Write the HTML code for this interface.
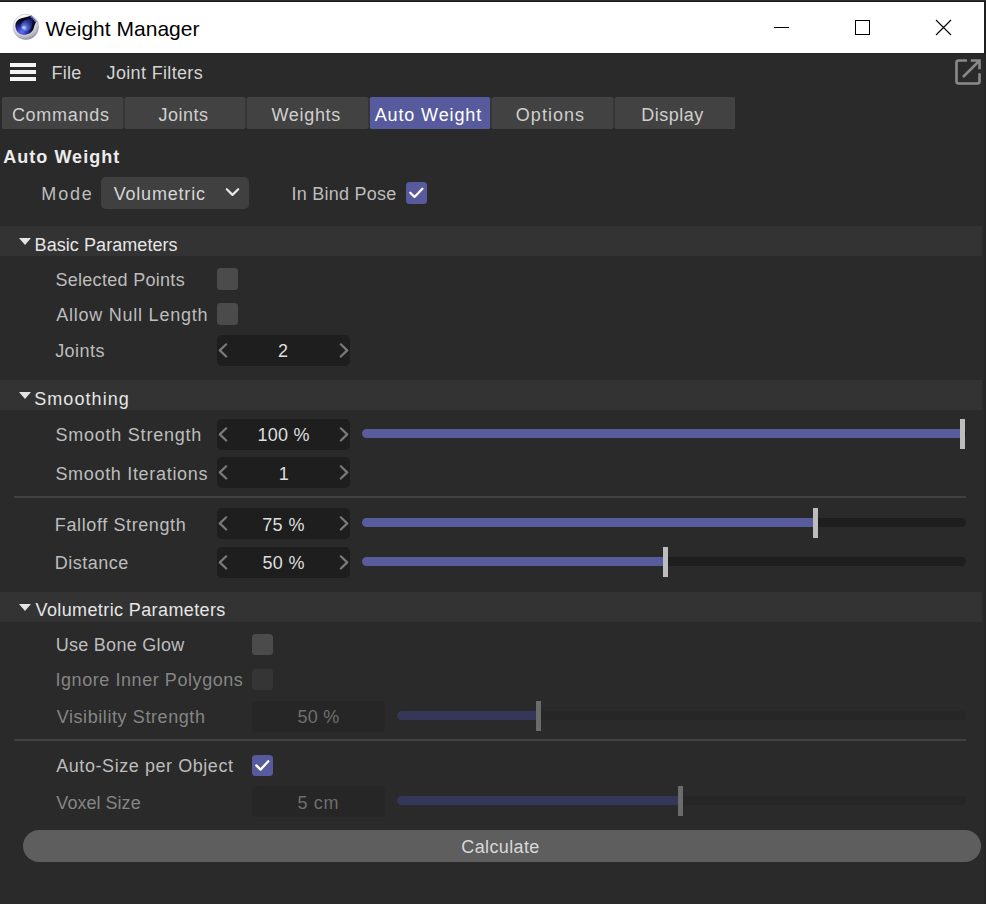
<!DOCTYPE html>
<html><head><meta charset="utf-8">
<style>
*{margin:0;padding:0;box-sizing:border-box}
html,body{width:986px;height:904px;overflow:hidden;background:#2a2a2a}
body{position:relative;font-family:"Liberation Sans",sans-serif;font-size:18px;line-height:18px}
.a{position:absolute}
.t{position:absolute;white-space:pre;font-size:18px;line-height:18px;color:#bdbdbd}
.tab{position:absolute;top:97px;height:32px;background:#424242;border-radius:1.5px}
.band{position:absolute;left:0;width:982px;height:30px;background:#333333}
.tri{position:absolute;width:0;height:0;border-left:6.1px solid transparent;border-right:6.1px solid transparent;border-top:7.3px solid #e4e4e4}
.cb{position:absolute;width:21px;height:22px;border-radius:3.5px;background:#4b4b4b}
.fld{position:absolute;left:217px;width:133px;height:31px;border-radius:5px;background:#1e1e1e}
.sep{position:absolute;left:14px;width:952px;height:2px;background:#404040}
.trk{position:absolute;left:362px;width:604px;height:9px;border-radius:4.5px;background:#1e1e1e}
.fill{position:absolute;left:0;top:0;height:9px;border-radius:4.5px 0 0 4.5px;background:#585c9d}
.hdl{position:absolute;top:-10.5px;width:5px;height:30px;background:#bdbdbd}
</style></head><body>
<!-- top border + title bar -->
<div class="a" style="left:0;top:0;width:986px;height:1px;background:#2b2b2b"></div>
<div class="a" style="left:0;top:1px;width:986px;height:1px;background:#1b1b1b"></div>
<div class="a" style="left:0;top:2px;width:984px;height:51px;background:#ffffff"></div>
<div class="a" style="left:0;top:53px;width:984px;height:1px;background:#242424"></div>
<div class="a" style="left:984px;top:2px;width:2px;height:52px;background:#1f1f1f"></div>
<div class="a" style="left:984px;top:54px;width:2px;height:850px;background:#262626"></div>
<!-- C4D icon -->
<svg class="a" style="left:10px;top:12px" width="32" height="32" viewBox="0 0 32 32">
<defs>
<radialGradient id="sph" cx="40%" cy="28%" r="78%"><stop offset="0" stop-color="#ffffff"/><stop offset="0.5" stop-color="#ececf0"/><stop offset="0.8" stop-color="#b8b8c4"/><stop offset="1" stop-color="#7c7c88"/></radialGradient>
<radialGradient id="drk" cx="30%" cy="85%" r="60%"><stop offset="0" stop-color="#6a70ff"/><stop offset="0.4" stop-color="#3038b0"/><stop offset="0.75" stop-color="#12144a"/><stop offset="1" stop-color="#06061c"/></radialGradient>
<radialGradient id="blb" cx="30%" cy="75%" r="80%"><stop offset="0" stop-color="#a0c0ff"/><stop offset="0.3" stop-color="#5068d0"/><stop offset="0.7" stop-color="#2a3490"/><stop offset="1" stop-color="#141a60"/></radialGradient>
</defs>
<circle cx="15.8" cy="14.7" r="13" fill="url(#sph)"/>
<circle cx="15.8" cy="14.7" r="12.6" fill="none" stroke="#9a9aa8" stroke-width="0.5" opacity="0.6"/>
<path d="M21.2 3.6 L26.5 9.2 C25.5 10.5 24.5 13 23.5 17 C22 20.5 19 22.6 13.5 22.8 C8.5 22.6 5.4 18.5 5.3 13.5 C5.5 10 7.5 7.8 10 6.8 C13 5.6 17.5 5.2 21.2 3.6Z" fill="url(#drk)"/>
<path d="M21.2 3.6 L26.5 9.2 L25.2 10.2 C23.8 7.8 22.3 6.3 20.2 5 Z" fill="#7078e0"/>
<path d="M22.5 6 C23 9 22.5 12.5 21.2 15.5 C19.8 18.3 17.5 19.3 15.5 19.2 C12.8 19 11 17 11 14.5 C11 11 13.5 8.6 16.8 7.5 C18.8 6.8 20.8 6.4 22.5 6Z" fill="url(#blb)"/>
<ellipse cx="13.6" cy="15.6" rx="1.8" ry="1.3" fill="#b0ccff" opacity="0.85"/>
</svg>
<!-- window controls -->
<div class="a" style="left:774px;top:27px;width:15px;height:1px;background:#000"></div>
<div class="a" style="left:855px;top:20px;width:15px;height:15px;border:1px solid #000"></div>
<svg class="a" style="left:935px;top:19px" width="17" height="17" viewBox="0 0 17 17"><path d="M1 1L16 16M16 1L1 16" stroke="#000" stroke-width="1.1"/></svg>

<!-- menu bar -->
<div class="a" style="left:10px;top:63px;width:26px;height:3.5px;background:#f4f4f4"></div>
<div class="a" style="left:10px;top:70.1px;width:26px;height:3.5px;background:#f4f4f4"></div>
<div class="a" style="left:10px;top:77.3px;width:26px;height:3.5px;background:#f4f4f4"></div>
<svg class="a" style="left:955px;top:59px" width="26" height="26" viewBox="0 0 26 26" fill="none" stroke="#8a8a8a" stroke-width="2.6">
<path d="M12 1.5H3.5Q1.5 1.5 1.5 3.5V22.5Q1.5 24.5 3.5 24.5H22.5Q24.5 24.5 24.5 22.5V14.2"/>
<path d="M15.8 1.5H24.5V10.2M24.2 1.8L8 18"/>
</svg>

<!-- tabs -->
<div class="a" style="left:4px;top:98px;width:729px;height:30px;background:#363636"></div>
<div class="tab" style="left:2px;width:121.3px"></div>
<div class="tab" style="left:124.8px;width:120.6px"></div>
<div class="tab" style="left:246.8px;width:121.2px"></div>
<div class="tab" style="left:369.7px;width:120.3px;background:#575b9d"></div>
<div class="tab" style="left:491.7px;width:121.2px"></div>
<div class="tab" style="left:614.7px;width:120.3px"></div>

<!-- Auto Weight heading -->
<div class="a" style="left:101px;top:177px;width:148px;height:32px;border-radius:5px;background:#404040"></div>
<svg class="a" style="left:225px;top:187px" width="15" height="11" viewBox="0 0 15 11"><path d="M1.8 2.2L7.5 7.9L13.2 2.2" fill="none" stroke="#e6e6e6" stroke-width="2.2" stroke-linecap="round" stroke-linejoin="round"/></svg>
<div class="cb" style="left:406px;top:182px;background:#575b9d"></div>
<svg class="a" style="left:406px;top:182px" width="21" height="22" viewBox="0 0 21 22"><path d="M4.3 10.8L8.5 15L16.4 6.8" fill="none" stroke="#fff" stroke-width="2.3" stroke-linecap="round" stroke-linejoin="round"/></svg>

<!-- Basic Parameters -->
<div class="band" style="top:226px"></div>
<div class="tri" style="left:19.4px;top:238px"></div>
<div class="cb" style="left:217px;top:268px"></div>
<div class="cb" style="left:217px;top:303px"></div>
<div class="fld" style="top:335px"><svg class="a" style="left:0;top:0" width="133" height="31" viewBox="0 0 133 31"><path d="M9.2 9.3L2.8 15.4L9.2 21.5M123.8 9.3L130.2 15.4L123.8 21.5" fill="none" stroke="#7a7a7a" stroke-width="2.2" stroke-linecap="round" stroke-linejoin="round"/></svg></div>

<!-- Smoothing -->
<div class="band" style="top:380px"></div>
<div class="tri" style="left:19.4px;top:392px"></div>
<div class="fld" style="top:419px"><svg class="a" style="left:0;top:0" width="133" height="31" viewBox="0 0 133 31"><path d="M9.2 9.3L2.8 15.4L9.2 21.5M123.8 9.3L130.2 15.4L123.8 21.5" fill="none" stroke="#7a7a7a" stroke-width="2.2" stroke-linecap="round" stroke-linejoin="round"/></svg></div>
<div class="trk" style="top:429px"><div class="fill" style="width:600px"></div><div class="hdl" style="left:598px"></div></div>
<div class="fld" style="top:457px"><svg class="a" style="left:0;top:0" width="133" height="31" viewBox="0 0 133 31"><path d="M9.2 9.3L2.8 15.4L9.2 21.5M123.8 9.3L130.2 15.4L123.8 21.5" fill="none" stroke="#7a7a7a" stroke-width="2.2" stroke-linecap="round" stroke-linejoin="round"/></svg></div>
<div class="sep" style="top:496px"></div>
<div class="fld" style="top:508px"><svg class="a" style="left:0;top:0" width="133" height="31" viewBox="0 0 133 31"><path d="M9.2 9.3L2.8 15.4L9.2 21.5M123.8 9.3L130.2 15.4L123.8 21.5" fill="none" stroke="#7a7a7a" stroke-width="2.2" stroke-linecap="round" stroke-linejoin="round"/></svg></div>
<div class="trk" style="top:518px"><div class="fill" style="width:451px"></div><div class="hdl" style="left:451px"></div></div>
<div class="fld" style="top:547px"><svg class="a" style="left:0;top:0" width="133" height="31" viewBox="0 0 133 31"><path d="M9.2 9.3L2.8 15.4L9.2 21.5M123.8 9.3L130.2 15.4L123.8 21.5" fill="none" stroke="#7a7a7a" stroke-width="2.2" stroke-linecap="round" stroke-linejoin="round"/></svg></div>
<div class="trk" style="top:557px"><div class="fill" style="width:301px"></div><div class="hdl" style="left:301px"></div></div>

<!-- Volumetric Parameters -->
<div class="band" style="top:592px"></div>
<div class="tri" style="left:19.4px;top:604px"></div>
<div class="cb" style="left:252px;top:634px;height:21px"></div>
<div class="cb" style="left:252px;top:669px;height:21px;background:#353535"></div>
<div class="fld" style="left:252px;top:701px;background:#262626"></div>
<div class="trk" style="left:397px;width:569px;top:711px;height:9px;background:#262626"><div class="fill" style="width:141px;height:9px;background:#34365a"></div><div class="hdl" style="left:139px;background:#6b6b6b"></div></div>
<div class="sep" style="top:739px"></div>
<div class="cb" style="left:252px;top:755px;height:21px;background:#575b9d"></div>
<svg class="a" style="left:252px;top:755px" width="21" height="21" viewBox="0 0 21 21"><path d="M4.3 10.4L8.5 14.6L16.3 6.3" fill="none" stroke="#fff" stroke-width="2.3" stroke-linecap="round" stroke-linejoin="round"/></svg>
<div class="fld" style="left:252px;top:786px;background:#262626"></div>
<div class="trk" style="left:397px;width:569px;top:796px;height:9px;background:#262626"><div class="fill" style="width:283px;height:9px;background:#34365a"></div><div class="hdl" style="left:281px;background:#6b6b6b"></div></div>

<!-- Calculate -->
<div class="a" style="left:23px;top:830px;width:957.5px;height:32px;border-radius:16px;background:#5e5e5e"></div>
<div class="t" style="left:45.59px;top:17.80px;font-size:21px;line-height:21px;color:#000000;font-weight:normal;letter-spacing:0.016px">Weight Manager</div>
<div class="t" style="left:51.60px;top:64.00px;font-size:18px;line-height:18px;color:#d4d4d4;font-weight:normal;letter-spacing:0.209px">File</div>
<div class="t" style="left:106.60px;top:64.00px;font-size:18px;line-height:18px;color:#d4d4d4;font-weight:normal;letter-spacing:0.339px">Joint Filters</div>
<div class="t" style="left:11.89px;top:106.00px;font-size:18px;line-height:18px;color:#cfcfcf;font-weight:normal;letter-spacing:0.727px">Commands</div>
<div class="t" style="left:158.60px;top:106.00px;font-size:18px;line-height:18px;color:#cfcfcf;font-weight:normal;letter-spacing:0.472px">Joints</div>
<div class="t" style="left:271.42px;top:106.00px;font-size:18px;line-height:18px;color:#cfcfcf;font-weight:normal;letter-spacing:0.699px">Weights</div>
<div class="t" style="left:374.66px;top:106.00px;font-size:18px;line-height:18px;color:#ffffff;font-weight:normal;letter-spacing:0.884px">Auto Weight</div>
<div class="t" style="left:515.84px;top:106.00px;font-size:18px;line-height:18px;color:#cfcfcf;font-weight:normal;letter-spacing:1.023px">Options</div>
<div class="t" style="left:641.18px;top:106.00px;font-size:18px;line-height:18px;color:#cfcfcf;font-weight:normal;letter-spacing:0.526px">Display</div>
<div class="t" style="left:3.29px;top:148.00px;font-size:18px;line-height:18px;color:#ececec;font-weight:bold;letter-spacing:1.032px">Auto Weight</div>
<div class="t" style="left:41.37px;top:185.00px;font-size:18px;line-height:18px;color:#bdbdbd;font-weight:normal;letter-spacing:1.829px">Mode</div>
<div class="t" style="left:113.70px;top:185.00px;font-size:18px;line-height:18px;color:#d6d6d6;font-weight:normal;letter-spacing:0.802px">Volumetric</div>
<div class="t" style="left:291.42px;top:185.00px;font-size:18px;line-height:18px;color:#bdbdbd;font-weight:normal;letter-spacing:0.247px">In Bind Pose</div>
<div class="t" style="left:34.60px;top:236.00px;font-size:18px;line-height:18px;color:#e6e6e6;font-weight:normal;letter-spacing:0.063px">Basic Parameters</div>
<div class="t" style="left:55.42px;top:271.00px;font-size:18px;line-height:18px;color:#bdbdbd;font-weight:normal;letter-spacing:0.297px">Selected Points</div>
<div class="t" style="left:56.24px;top:306.00px;font-size:18px;line-height:18px;color:#bdbdbd;font-weight:normal;letter-spacing:0.760px">Allow Null Length</div>
<div class="t" style="left:55.14px;top:342.00px;font-size:18px;line-height:18px;color:#bdbdbd;font-weight:normal;letter-spacing:0.487px">Joints</div>
<div class="t" style="left:278.00px;top:342.00px;font-size:18px;line-height:18px;color:#dedede;font-weight:normal;letter-spacing:0.000px">2</div>
<div class="t" style="left:34.24px;top:390.00px;font-size:18px;line-height:18px;color:#e6e6e6;font-weight:normal;letter-spacing:1.063px">Smoothing</div>
<div class="t" style="left:55.42px;top:426.00px;font-size:18px;line-height:18px;color:#bdbdbd;font-weight:normal;letter-spacing:0.771px">Smooth Strength</div>
<div class="t" style="left:257.45px;top:426.00px;font-size:18px;line-height:18px;color:#dedede;font-weight:normal;letter-spacing:0.287px">100 %</div>
<div class="t" style="left:55.42px;top:465.00px;font-size:18px;line-height:18px;color:#bdbdbd;font-weight:normal;letter-spacing:0.686px">Smooth Iterations</div>
<div class="t" style="left:278.69px;top:465.00px;font-size:18px;line-height:18px;color:#dedede;font-weight:normal;letter-spacing:0.000px">1</div>
<div class="t" style="left:54.81px;top:516.00px;font-size:18px;line-height:18px;color:#bdbdbd;font-weight:normal;letter-spacing:0.613px">Falloff Strength</div>
<div class="t" style="left:262.21px;top:516.00px;font-size:18px;line-height:18px;color:#dedede;font-weight:normal;letter-spacing:0.401px">75 %</div>
<div class="t" style="left:54.81px;top:554.00px;font-size:18px;line-height:18px;color:#bdbdbd;font-weight:normal;letter-spacing:0.495px">Distance</div>
<div class="t" style="left:262.42px;top:554.00px;font-size:18px;line-height:18px;color:#dedede;font-weight:normal;letter-spacing:0.340px">50 %</div>
<div class="t" style="left:35.51px;top:601.00px;font-size:18px;line-height:18px;color:#e6e6e6;font-weight:normal;letter-spacing:0.389px">Volumetric Parameters</div>
<div class="t" style="left:55.65px;top:636.00px;font-size:18px;line-height:18px;color:#bdbdbd;font-weight:normal;letter-spacing:0.290px">Use Bone Glow</div>
<div class="t" style="left:55.43px;top:671.00px;font-size:18px;line-height:18px;color:#858585;font-weight:normal;letter-spacing:0.566px">Ignore Inner Polygons</div>
<div class="t" style="left:56.70px;top:708.00px;font-size:18px;line-height:18px;color:#858585;font-weight:normal;letter-spacing:0.583px">Visibility Strength</div>
<div class="t" style="left:297.42px;top:708.00px;font-size:18px;line-height:18px;color:#6e6e6e;font-weight:normal;letter-spacing:0.290px">50 %</div>
<div class="t" style="left:56.22px;top:757.00px;font-size:18px;line-height:18px;color:#bdbdbd;font-weight:normal;letter-spacing:0.564px">Auto-Size per Object</div>
<div class="t" style="left:56.36px;top:794.00px;font-size:18px;line-height:18px;color:#858585;font-weight:normal;letter-spacing:0.028px">Voxel Size</div>
<div class="t" style="left:297.42px;top:794.00px;font-size:18px;line-height:18px;color:#6e6e6e;font-weight:normal;letter-spacing:0.655px">5 cm</div>
<div class="t" style="left:461.35px;top:838.00px;font-size:18px;line-height:18px;color:#d8d8d8;font-weight:normal;letter-spacing:0.366px">Calculate</div>
</body></html>
